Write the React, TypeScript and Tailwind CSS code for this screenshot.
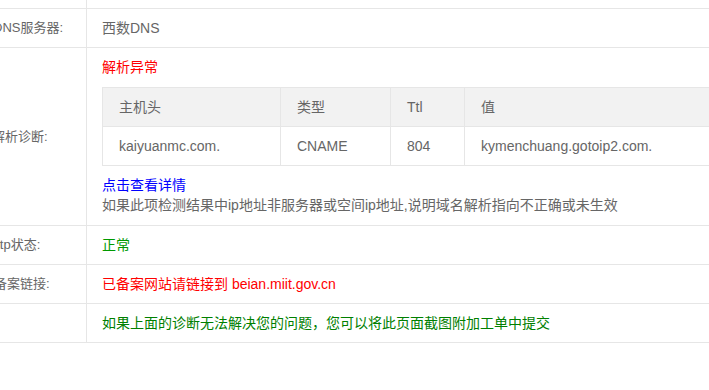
import React from 'react'

const font = { fontFamily: '"Liberation Sans", "Noto Sans CJK SC", sans-serif' }

interface Record {
  host: string
  type: string
  ttl: string
  value: string
}

const records: Record[] = [
  { host: 'kaiyuanmc.com.', type: 'CNAME', ttl: '804', value: 'kymenchuang.gotoip2.com.' },
]

function Row({ label, offset, children, tall }: { label?: string; offset?: string; children?: React.ReactNode; tall?: boolean }) {
  return (
    <div className="flex border-b border-[#e6e6e6]">
      <div className={`w-[87px] shrink-0 border-r border-[#e6e6e6] flex items-center overflow-hidden ${tall ? '' : 'h-[38px]'}`}>
        {label && (
          <span className={`whitespace-nowrap text-[13px] text-[#666] ${offset ?? 'ml-[-7px]'}`}>{label}</span>
        )}
      </div>
      <div className={`flex-1 pl-[15px] text-[14px] ${tall ? '' : 'h-[38px] flex items-center'}`}>{children}</div>
    </div>
  )
}

export default function App() {
  return (
    <div className="w-[709px] h-[390px] bg-white overflow-hidden" style={font}>
      {/* linha cortada no topo */}
      <div className="flex border-b border-[#e6e6e6]">
        <div className="w-[87px] h-[8px] border-r border-[#e6e6e6]" />
      </div>

      <Row label="DNS服务器:">
        <span className="text-[#666]">西数DNS</span>
      </Row>

      {/* Diagnóstico */}
      <div className="flex border-b border-[#e6e6e6]">
        <div className="w-[87px] shrink-0 border-r border-[#e6e6e6] flex items-center overflow-hidden">
          <span className="whitespace-nowrap text-[13px] text-[#666] ml-[-8px]">解析诊断:</span>
        </div>
        <div className="flex-1 pl-[15px] pt-[9px] pb-[10px] text-[14px] overflow-hidden">
          <p className="leading-[20px] text-[#ff0000]">解析异常</p>
          <table className="mt-[10px] w-[720px] border-collapse text-[#666] text-left">
            <thead>
              <tr className="bg-[#f2f2f2] h-[39px]">
                <th className="font-normal w-[178px] pl-[16px] border border-[#e6e6e6]">主机头</th>
                <th className="font-normal w-[110px] pl-[16px] border border-[#e6e6e6]">类型</th>
                <th className="font-normal w-[74px] pl-[16px] border border-[#e6e6e6]">Ttl</th>
                <th className="font-normal pl-[16px] border border-[#e6e6e6]">值</th>
              </tr>
            </thead>
            <tbody>
              {records.map((r) => (
                <tr key={r.host} className="h-[39px]">
                  <td className="pl-[16px] border border-[#e6e6e6]">{r.host}</td>
                  <td className="pl-[16px] border border-[#e6e6e6]">{r.type}</td>
                  <td className="pl-[16px] border border-[#e6e6e6]">{r.ttl}</td>
                  <td className="pl-[16px] border border-[#e6e6e6]">{r.value}</td>
                </tr>
              ))}
            </tbody>
          </table>
          <p className="mt-[9px] leading-[20px] text-[#0000ff]">点击查看详情</p>
          <p className="leading-[20px] text-[#666] whitespace-nowrap">如果此项检测结果中ip地址非服务器或空间ip地址,说明域名解析指向不正确或未生效</p>
        </div>
      </div>

      <Row label="http状态:" offset="ml-[-11px]">
        <span className="text-[#009900]">正常</span>
      </Row>

      <Row label="备案链接:" offset="ml-[-6px]">
        <span className="text-[#ff0000]">已备案网站请链接到 beian.miit.gov.cn</span>
      </Row>

      <Row>
        <span className="text-[#008000]">如果上面的诊断无法解决您的问题，您可以将此页面截图附加工单中提交</span>
      </Row>
    </div>
  )
}
